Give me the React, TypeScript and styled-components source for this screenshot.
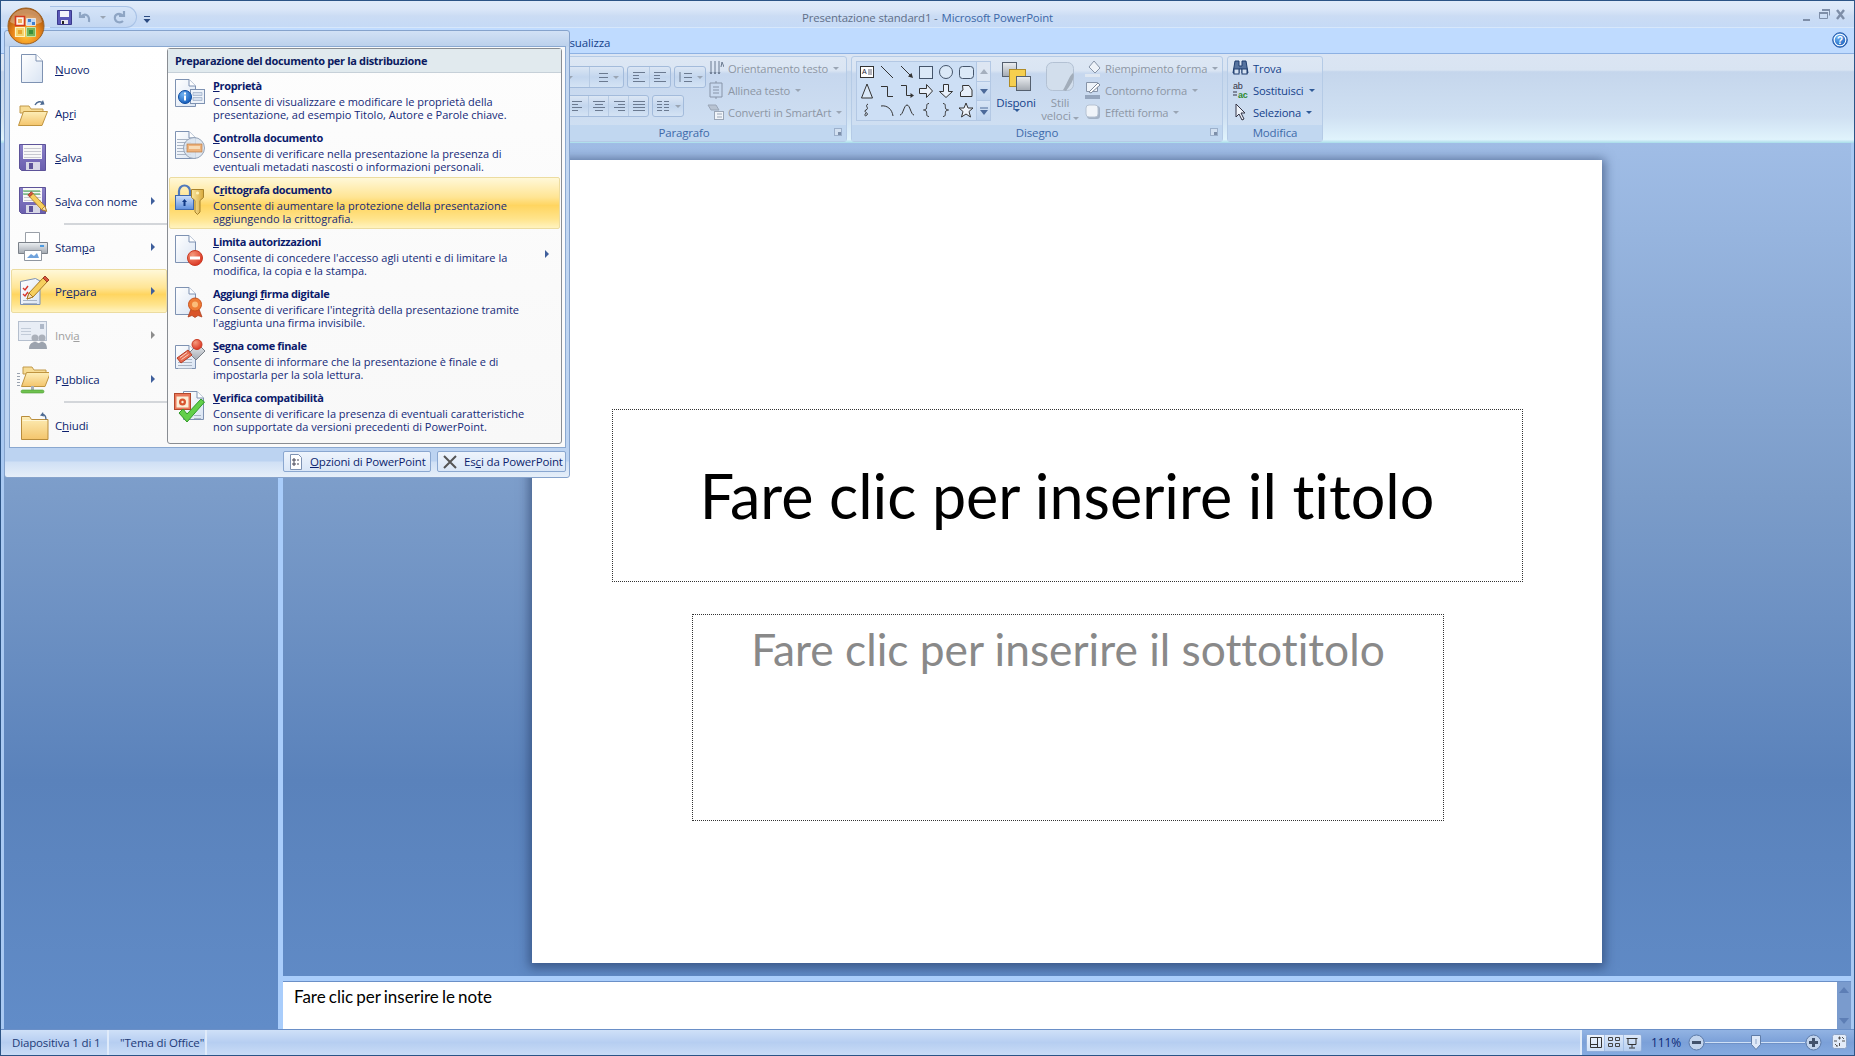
import React from "react";
import styled, { createGlobalStyle } from "styled-components";

const GlobalStyle = createGlobalStyle`
  html, body { margin: 0; padding: 0; height: 100%; overflow: hidden; }
  #root { height: 100%; }
  body { font-family: "Open Sans", "Liberation Sans", sans-serif; font-size: 11px; }
  u { text-underline-offset: 1px; }
`;

const Window = styled.div`
  position: relative;
  width: 1855px;
  height: 1056px;
  display: flex;
  flex-direction: column;
  overflow: hidden;
  background: #bfdbff;
  box-sizing: border-box;
  border: 1px solid #2c5486;
  letter-spacing: -0.15px;
`;

const DefsHolder = styled.svg`
  position: absolute;
  width: 0;
  height: 0;
`;

/* title bar */
const TitleBar = styled.div`
  height: 27px;
  flex: none;
  box-sizing: border-box;
  display: flex;
  align-items: center;
  justify-content: center;
  background: linear-gradient(#e0ebfa 0, #dbe7f8 30%, #cbdcf4 55%, #c5daf6 96%, #e6f3ff 100%);
  padding-top: 6px;
  font-size: 11.4px;
`;
const TitleDoc = styled.span` color: #5f6f88; `;
const TitleApp = styled.span` color: #3c68a8; margin-left: 4px; `;

const Qat = styled.div`
  position: absolute;
  left: 49px;
  top: 5px;
  width: 87px;
  height: 22px;
  box-sizing: border-box;
  border: 1px solid #a8c2e6;
  border-left: 0;
  border-radius: 0 12px 12px 0;
  background: linear-gradient(#d5e4f8, #c3d7f2);
  display: flex;
  align-items: center;
  padding-left: 7px;
  gap: 6px;
`;
const QatMore = styled.div`
  position: absolute;
  left: 142px;
  top: 12px;
  width: 8px;
  height: 10px;
`;
const WinControls = styled.div`
  position: absolute;
  right: 3px;
  top: 4px;
  display: flex;
`;

/* tabs */
const TabRow = styled.div`
  height: 25px;
  flex: none;
  box-sizing: border-box;
  background: #bfdbff;
  display: flex;
  align-items: center;
  padding: 3px 0 0 101px;
  color: #15428b;
  font-size: 11.5px;
`;
const Tab = styled.span<{ $w: number }>`
  width: ${(p) => p.$w}px;
  flex: none;
`;
const HelpSlot = styled.div`
  margin-left: auto;
  margin-right: 6px;
  width: 16px;
  height: 16px;
  margin-top: -5px;
`;

/* ribbon */
const Ribbon = styled.div`
  height: 90px;
  flex: none;
  box-sizing: border-box;
  padding: 2px 5px 1px 4px;
  display: flex;
  gap: 4px;
  border-top: 1px solid #8db1e3;
  background: linear-gradient(#dbe5f3 0, #d9e4f2 18%, #c5d6ec 20%, #cfe0f2 70%, #e0f3fc 96%, #a7dde9 100%);
`;
const Group = styled.section<{ $w: number }>`
  flex: none;
  width: ${(p) => p.$w}px;
  height: 86px;
  box-sizing: border-box;
  border: 1px solid #b5cbe6;
  border-radius: 3px;
  display: flex;
  flex-direction: column;
  background: linear-gradient(#dde7f4 0, #dae5f3 16%, #c6d7ee 20%, #d1e1f3 100%);
`;
const GroupBody = styled.div`
  flex: 1;
  display: flex;
  min-height: 0;
`;
const Caption = styled.div`
  position: relative;
  height: 16px;
  flex: none;
  text-align: center;
  line-height: 15px;
  color: #3e6aaa;
  background: #c1d7f0;
  font-size: 11.5px;
`;
const Launcher = styled.div`
  position: absolute;
  right: 4px;
  top: 3px;
  width: 8px;
  height: 8px;
  border: 1px solid #9cb0cb;
  box-sizing: border-box;
  background: #d2e0f1;
  &::after {
    content: "";
    position: absolute;
    right: 0;
    bottom: 0;
    width: 3px;
    height: 3px;
    background: #7d8fa9;
  }
`;
const ParaTools = styled.div`
  flex: 1;
  display: flex;
  flex-direction: column;
  align-items: flex-end;
  padding-top: 9px;
  gap: 7px;
`;
const ToolRow = styled.div<{ $pad?: number }>`
  display: flex;
  gap: 3px;
  padding-right: ${(p) => p.$pad ?? 0}px;
`;
const ToolSet = styled.div`
  display: flex;
  height: 22px;
  box-sizing: border-box;
  border: 1px solid #a3bbdb;
  border-radius: 3px;
  background: linear-gradient(#dbe6f4, #c3d6ee 50%, #d4e3f4);
`;
const ToolCell = styled.div<{ $w: number }>`
  width: ${(p) => p.$w}px;
  display: flex;
  align-items: center;
  justify-content: center;
  gap: 2px;
  box-sizing: border-box;
  border-left: 1px solid #b7cbe4;
  &:first-child { border-left: 0; }
`;
const CommandList = styled.div<{ $w: number; $left?: number }>`
  width: ${(p) => p.$w}px;
  flex: none;
  margin-left: ${(p) => p.$left ?? 0}px;
`;
const Command = styled.div<{ $off?: boolean }>`
  height: 22px;
  display: flex;
  align-items: center;
  gap: 3px;
  white-space: nowrap;
  color: ${(p) => (p.$off ? "#8d97a5" : "#15428b")};
  font-size: 11.2px;
`;
const CommandIcon = styled.span`
  width: 18px;
  height: 18px;
  flex: none;
  display: flex;
  align-items: center;
  justify-content: center;
`;
const Caret = styled.i<{ $off?: boolean }>`
  display: inline-block;
  width: 0;
  height: 0;
  margin-left: 2px;
  border: 3px solid transparent;
  border-bottom: 0;
  border-top-color: ${(p) => (p.$off ? "#9aa5b4" : "#2f5a97")};
`;
const Gallery = styled.div`
  margin: 4px 3px 0 4px;
  width: 135px;
  height: 60px;
  flex: none;
  box-sizing: border-box;
  border: 1px solid #b3c8e4;
  background: #cddff5;
  display: flex;
`;
const GalleryGrid = styled.div`
  width: 119px;
  display: grid;
  grid-template-columns: repeat(6, 1fr);
  grid-auto-rows: 1fr;
`;
const GalleryCell = styled.div`
  display: flex;
  align-items: center;
  justify-content: center;
`;
const GalleryScroll = styled.div`
  flex: 1;
  display: flex;
  flex-direction: column;
  border-left: 1px solid #b3c8e4;
`;
const ScrollBtn = styled.div<{ $active?: boolean }>`
  flex: 1;
  display: flex;
  align-items: center;
  justify-content: center;
  border-bottom: 1px solid #b3c8e4;
  background: ${(p) => (p.$active ? "linear-gradient(#d8e5f6,#bdd3ee)" : "#dde6f2")};
  &:last-child { border-bottom: 0; }
`;
const BigButton = styled.div<{ $w: number; $off?: boolean; $left?: number }>`
  width: ${(p) => p.$w}px;
  flex: none;
  margin-left: ${(p) => p.$left ?? 0}px;
  display: flex;
  flex-direction: column;
  align-items: center;
  text-align: center;
  color: ${(p) => (p.$off ? "#8d97a5" : "#15428b")};
  font-size: 11.5px;
  line-height: 13px;
`;
const BigIcon = styled.div`
  height: 39px;
  padding-top: 5px;
  box-sizing: border-box;
`;

/* workspace */
const Workspace = styled.div`
  flex: 1;
  min-height: 0;
  display: flex;
  border-left: 3px solid #a9c9f2;
  border-right: 3px solid #a9c9f2;
  background: linear-gradient(#a0bde6 0, #7b9cc9 40%, #5a82bb 72%, #618cc8 100%);
`;
const ThumbPane = styled.div`
  width: 274px;
  flex: none;
`;
const Splitter = styled.div`
  width: 5px;
  flex: none;
  background: #a9cdfb;
`;
const Main = styled.div`
  flex: 1;
  min-width: 0;
  display: flex;
  flex-direction: column;
`;
const Canvas = styled.div`
  flex: 1;
  min-height: 0;
  display: flex;
  align-items: center;
  justify-content: center;
  padding-top: 4px;
`;
const Slide = styled.div`
  width: 1070px;
  height: 803px;
  background: #fff;
  box-shadow: 0 2px 10px 3px rgba(30, 50, 90, 0.55);
  display: flex;
  flex-direction: column;
  align-items: center;
  padding-top: 249px;
  box-sizing: border-box;
  font-family: Lato, "Open Sans", sans-serif;
  font-variant-ligatures: none;
  letter-spacing: 0;
`;
const Placeholder = styled.div<{ $w: number; $h: number; $top?: number; $left?: number }>`
  width: ${(p) => p.$w}px;
  height: ${(p) => p.$h}px;
  margin-top: ${(p) => p.$top ?? 0}px;
  margin-left: ${(p) => p.$left ?? 0}px;
  box-sizing: border-box;
  border: 1px dotted #333;
  text-align: center;
`;
const TitleText = styled.div`
  font-size: 61px;
  line-height: 172px;
  color: #000;
`;
const SubtitleText = styled.div`
  font-size: 44.3px;
  line-height: 68px;
  color: #898989;
`;
const NotesStrip = styled.div`
  height: 5px;
  flex: none;
  background: #a9cdfb;
`;
const Notes = styled.div`
  height: 48px;
  flex: none;
  display: flex;
  box-sizing: border-box;
  border-top: 1px solid #6a8fc7;
  background: #fff;
`;
const NotesText = styled.div`
  flex: 1;
  padding: 4px 11px;
  font-family: Lato, "Open Sans", sans-serif;
  font-size: 17px;
  letter-spacing: 0;
  word-spacing: -1.2px;
  color: #000;
`;
const NotesScroll = styled.div`
  width: 14px;
  flex: none;
  background: #7a9bcd;
  display: flex;
  flex-direction: column;
  align-items: center;
  justify-content: space-between;
  padding: 5px 0;
`;

/* status bar */
const StatusBar = styled.div`
  height: 25px;
  flex: none;
  display: flex;
  align-items: stretch;
  border-top: 1px solid #6a8fc7;
  background: linear-gradient(#cfe0f8, #b6cef1 50%, #c9dcf6);
  color: #1d3b78;
  font-size: 11.5px;
`;
const StatusCell = styled.div<{ $w: number }>`
  width: ${(p) => p.$w}px;
  box-sizing: border-box;
  padding-left: 11px;
  display: flex;
  align-items: center;
  white-space: nowrap;
  border-right: 2px solid #e0ebfa;
`;
const StatusRight = styled.div`
  margin-left: auto;
  width: 274px;
  border-left: 2px solid #e0ebfa;
  box-sizing: border-box;
  display: flex;
  align-items: center;
  padding-left: 4px;
  background: linear-gradient(#92b3e3, #7ba0d8 50%, #86abe0);
  color: #0d2a78;
`;
const ViewButtons = styled.div`
  width: 56px;
  height: 18px;
  display: flex;
  box-sizing: border-box;
  border: 1px solid #8fadda;
  border-radius: 2px;
  background: linear-gradient(#dce8f9, #b7cff0);
`;
const ViewBtn = styled.div`
  flex: 1;
  display: flex;
  align-items: center;
  justify-content: center;
  border-left: 1px solid #a4bfe6;
  &:first-child { border-left: 0; background: linear-gradient(#eff5fd, #cfe0f7); }
`;
const ZoomPct = styled.span`
  margin-left: 9px;
  width: 37px;
  font-size: 12px;
`;
const SliderTrack = styled.div`
  position: relative;
  width: 100px;
  height: 1px;
  background: #cfe0f6;
  box-shadow: 0 1px 0 #6f92c8;
`;
const SliderThumb = styled.div`
  position: absolute;
  left: 46px;
  top: -7px;
`;
const FitBtn = styled.div`
  margin-left: 10px;
`;

/* office menu */
const Orb = styled.div`
  position: absolute;
  left: 6px;
  top: 6px;
  width: 38px;
  height: 38px;
  z-index: 3;
`;
const Menu = styled.div`
  position: absolute;
  left: 3px;
  top: 29px;
  width: 566px;
  height: 448px;
  z-index: 2;
  box-sizing: border-box;
  border: 1px solid #86a3cc;
  border-radius: 3px;
  padding: 15px 3px 0 4px;
  background: linear-gradient(#d2e1f5 0, #bcd1ec 15px, #c5d8f0 16px, #bcd3f1 417px, #bcd3f1 430px, #d0e0f5 431px, #e6eff9 100%);
  display: flex;
  flex-direction: column;
`;
const MenuBody = styled.div`
  height: 402px;
  flex: none;
  box-sizing: border-box;
  border: 1px solid #8aa8d0;
  background: #fafafa;
  display: flex;
`;
const LeftMenu = styled.div`
  width: 157px;
  flex: none;
  background: linear-gradient(#fff, #f9f9f9);
`;
const LeftItem = styled.div<{ $on?: boolean; $off?: boolean }>`
  height: 44px;
  display: flex;
  align-items: center;
  box-sizing: border-box;
  padding-left: 5px;
  margin-left: 1px;
  gap: 6px;
  color: ${(p) => (p.$off ? "#a0a0a0" : "#0c1f6e")};
  font-size: 11.5px;
  border: 1px solid ${(p) => (p.$on ? "#ecdca0" : "transparent")};
  border-radius: 2px;
  background: ${(p) =>
    p.$on ? "linear-gradient(#fff8d8 0, #ffe595 42%, #ffd560 58%, #ffe48c 82%, #fff3bf 100%)" : "none"};
`;
const LeftLabel = styled.span`
  flex: 1;
`;
const SubArrow = styled.i<{ $off?: boolean }>`
  width: 0;
  height: 0;
  margin-right: 11px;
  border: 4px solid transparent;
  border-right: 0;
  border-left: 4px solid ${(p) => (p.$off ? "#8d8d8d" : "#3f5f9c")};
`;
const MenuRule = styled.div`
  height: 2px;
  margin-left: 54px;
  background: #d3d6da;
`;
const RightPanel = styled.div`
  width: 395px;
  height: 396px;
  flex: none;
  margin: 1px 0 0 0;
  box-sizing: border-box;
  border: 1px solid #898d93;
  border-radius: 3px;
  background: linear-gradient(#fdfdfd, #f8f8f8);
`;
const PanelHead = styled.div`
  height: 24px;
  box-sizing: border-box;
  padding-left: 7px;
  display: flex;
  align-items: center;
  background: #e1eaee;
  border-bottom: 1px solid #c6d0d8;
  color: #0b1a5f;
  font-weight: 700;
  font-size: 11px;
  letter-spacing: -0.33px;
`;
const PanelItem = styled.div<{ $on?: boolean }>`
  position: relative;
  height: 52px;
  display: flex;
  box-sizing: border-box;
  margin: 0 1px;
  padding: 5px 0 0 4px;
  gap: 7px;
  border: 1px solid ${(p) => (p.$on ? "#ecdca0" : "transparent")};
  border-radius: 2px;
  background: ${(p) =>
    p.$on ? "linear-gradient(#fff8d8 0, #ffe595 38%, #ffd560 55%, #ffe48c 82%, #fff3bf 100%)" : "none"};
`;
const PanelIcon = styled.div`
  width: 32px;
  flex: none;
`;
const PanelTitle = styled.div`
  font-weight: 700;
  color: #0b1a6b;
  font-size: 11px;
  line-height: 13px;
  height: 16px;
  letter-spacing: -0.35px;
`;
const PanelDesc = styled.div`
  color: #142a78;
  font-size: 11px;
  line-height: 13px;
  white-space: pre-line;
  letter-spacing: 0;
`;
const PanelArrow = styled(SubArrow)`
  position: absolute;
  right: 10px;
  top: 20px;
  margin: 0;
`;
const MenuFoot = styled.div`
  flex: 1;
  display: flex;
  justify-content: flex-end;
  gap: 6px;
  padding: 3px 0 0;
`;
const FootButton = styled.div<{ $w: number }>`
  width: ${(p) => p.$w}px;
  height: 21px;
  box-sizing: border-box;
  border: 1px solid #8aa7d0;
  border-radius: 2px;
  background: linear-gradient(#eef4fc, #d9e6f7);
  display: flex;
  align-items: center;
  gap: 6px;
  padding-left: 4px;
  color: #0c1f6e;
  font-size: 11.5px;
`;

/* drawings */
const Defs = () => (
  <DefsHolder aria-hidden="true">
    <defs>
      <linearGradient id="pg" x1="0" y1="0" x2="1" y2="1"><stop offset="0" stopColor="#ffffff" /><stop offset="1" stopColor="#d9e4f3" /></linearGradient>
      <linearGradient id="fo" x1="0" y1="0" x2="0" y2="1"><stop offset="0" stopColor="#fdeeb8" /><stop offset="1" stopColor="#f4c56c" /></linearGradient>
      <linearGradient id="fl" x1="0" y1="0" x2="0" y2="1"><stop offset="0" stopColor="#8a80c8" /><stop offset="1" stopColor="#6a5fae" /></linearGradient>
      <radialGradient id="orb" cx="50%" cy="75%" r="62%"><stop offset="0" stopColor="#ffc53a" /><stop offset=".55" stopColor="#ee8a1c" /><stop offset="1" stopColor="#b05a0e" /></radialGradient>
      <radialGradient id="blueb" cx="35%" cy="30%" r="80%"><stop offset="0" stopColor="#6fb2f2" /><stop offset="1" stopColor="#0d55b5" /></radialGradient>
      <radialGradient id="redb" cx="35%" cy="30%" r="80%"><stop offset="0" stopColor="#f49a7c" /><stop offset="1" stopColor="#d92b1a" /></radialGradient>
      <linearGradient id="lk" x1="0" y1="0" x2="0" y2="1"><stop offset="0" stopColor="#cfe1fb" /><stop offset="1" stopColor="#5f8fdc" /></linearGradient>
      <linearGradient id="kk" x1="0" y1="0" x2="1" y2="0"><stop offset="0" stopColor="#fbe8a0" /><stop offset="1" stopColor="#d8a93c" /></linearGradient>
      <linearGradient id="gr" x1="0" y1="0" x2="0" y2="1"><stop offset="0" stopColor="#eceff2" /><stop offset="1" stopColor="#a3a9b1" /></linearGradient>
    </defs>
  </DefsHolder>
);

const Sheet = ({ x = 0, y = 0, w = 22, h = 29 }: { x?: number; y?: number; w?: number; h?: number }) => (
  <g>
    <path d={`M${x + 0.5} ${y + 0.5}H${x + w - 7}L${x + w - 0.5} ${y + 7}V${y + h - 0.5}H${x + 0.5}Z`} fill="url(#pg)" stroke="#7e92b2" />
    <path d={`M${x + w - 7} ${y + 0.5}V${y + 7}H${x + w - 0.5}`} fill="#fff" stroke="#7e92b2" />
  </g>
);
const TextLines = ({ x, y, w, n, c = "#a9b4c4", step = 3 }: { x: number; y: number; w: number; n: number; c?: string; step?: number }) => (
  <path d={Array.from({ length: n }, (_, i) => `M${x} ${y + i * step + 0.5}h${w}`).join("")} stroke={c} />
);
const Pencil = ({ t = "" }: { t?: string }) => (
  <g transform={t}>
    <path d="M20 4l4 4L10 23l-6 2 2-6z" fill="#f6cf5e" stroke="#a97a24" />
    <path d="M6 19l4 4-6 2z" fill="#f5dfb8" stroke="#a97a24" />
    <path d="M20 4l2-2 4 4-2 2z" fill="#d8563b" stroke="#9c3c2a" />
  </g>
);
const Folder = ({ open }: { open?: boolean }) =>
  open ? (
    <g>
      <path d="M3 9h9l2 3h12v4H3z" fill="#f7dc95" stroke="#c29a4c" />
      <path d="M6.500 14.500H30.500L25 28.500H1.500z" fill="url(#fo)" stroke="#bf9440" />
    </g>
  ) : (
    <g>
      <path d="M2.500 7.500h8l2 3h16.500v20H2.500z" fill="url(#fo)" stroke="#b98d3c" />
      <path d="M3.500 11.500H28" stroke="#fff6d4" />
    </g>
  );
const Floppy = () => (
  <g>
    <path d="M1.500 1.500H27.500V27.500H3.500L1.500 25.500Z" fill="url(#fl)" stroke="#5d5399" />
    <rect x="5" y="2" width="19" height="14" fill="#f8f8f8" />
    <TextLines x={6} y={5} w={17} n={4} c="#c8c8d0" />
    <rect x="8" y="19" width="14" height="8" fill="#d7d7e6" />
    <rect x="11" y="20" width="4" height="6" fill="#5d5399" />
  </g>
);

const Ic = ({ s = 32, children }: { s?: number; children: React.ReactNode }) => (
  <svg width={s} height={s} viewBox={`0 0 ${s} ${s}`}>{children}</svg>
);

const icons = {
  nuovo: <Ic><Sheet x={4} y={1} /></Ic>,
  apri: (
    <Ic>
      <Folder open />
      <path d="M18 8c2-4 6-4 8-2" fill="none" stroke="#4d6a92" strokeWidth="1.400" />
      <path d="M26 3l1.500 4.500L23 8z" fill="#4d6a92" />
    </Ic>
  ),
  salva: <Ic><g transform="translate(1,2)"><Floppy /></g></Ic>,
  salvaNome: (
    <Ic>
      <g transform="translate(1,1)"><Floppy /></g>
      <path d="M6 6h17M6 9h17" stroke="#3aa24a" />
      <Pencil t="translate(33,5) scale(-.85,.85)" />
    </Ic>
  ),
  stampa: (
    <Ic>
      <path d="M8.500 1.500h14v10h-14z" fill="#fff" stroke="#9aa0a8" />
      <path d="M1.500 11.500h29v11h-29z" fill="url(#gr)" stroke="#7b8189" />
      <rect x="23" y="14" width="4" height="2" fill="#4d9ae0" />
      <path d="M7.500 19.500h17v10h-17z" fill="#fff" stroke="#8f96a0" />
      <path d="M10 27l4-4 3 2 3-3 2 5z" fill="#6fa2dc" />
    </Ic>
  ),
  prepara: (
    <Ic>
      <path d="M3.500 6.500l15-3L23 6v23.500H3.500z" fill="url(#pg)" stroke="#7e92b2" />
      <path d="M6 13l2 2 3-4M6 19l2 2 3-4" fill="none" stroke="#d8352a" strokeWidth="1.400" />
      <TextLines x={6} y={25} w={14} n={2} />
      <Pencil t="translate(6,-1)" />
    </Ic>
  ),
  invia: (
    <Ic>
      <rect x="1.500" y="2.500" width="28" height="19" fill="#e8edf5" stroke="#b5bfce" />
      <rect x="23" y="5" width="4" height="5" fill="#aeb8c8" />
      <TextLines x={4} y={9} w={10} n={3} c="#c2cbd8" />
      <circle cx="18" cy="19" r="3.500" fill="#aab0ba" /><circle cx="25" cy="19" r="3.500" fill="#aab0ba" />
      <path d="M12 30c0-6 4-7 6-7s6 1 6 7zM20 30c0-6 3-7 5-7s5 1 5 7z" fill="#9ca3ae" />
    </Ic>
  ),
  pubblica: (
    <Ic>
      <TextLines x={0} y={10} w={3} n={5} c="#9aa3b0" />
      <g transform="translate(3,-5)"><Folder open /></g>
      <rect x="14" y="23" width="3" height="5" fill="#a8adb5" />
      <rect x="4" y="27" width="23" height="3" rx="1.500" fill="#6fc24f" stroke="#4b9a33" strokeWidth=".6" />
    </Ic>
  ),
  chiudi: (
    <Ic>
      <g transform="translate(2,0)"><Folder /></g>
      <path d="M26 3l-3 3.500 4 1z" fill="#4d6a92" />
      <path d="M25 5.500c3 0 4 2 4 5" fill="none" stroke="#4d6a92" strokeWidth="1.300" />
    </Ic>
  ),
  proprieta: (
    <Ic>
      <Sheet x={1} y={0} w={21} h={28} />
      <rect x="16.500" y="10.500" width="14" height="14" fill="#eef3fa" stroke="#7e92b2" />
      <path d="M19 13.500h9v3h-9zM19 18.500h9v3h-9z" fill="#d5dfee" stroke="#9cadc6" strokeWidth=".7" />
      <circle cx="11" cy="18" r="6.500" fill="url(#blueb)" stroke="#0c4aa0" />
      <path d="M10 13.500h2v2h-2zM10 16.500h2v5h-2z" fill="#fff" />
    </Ic>
  ),
  controlla: (
    <Ic>
      <Sheet x={1} y={0} w={21} h={28} />
      <TextLines x={3} y={8} w={14} n={6} />
      <circle cx="20" cy="17" r="10.500" fill="#dbe4ef" fillOpacity=".85" stroke="#96a4b8" />
      <rect x="13" y="13" width="15" height="8" fill="#eeb37c" stroke="#b87a44" strokeWidth=".7" />
      <rect x="15" y="15" width="11" height="3" fill="#f7dcb8" />
    </Ic>
  ),
  critto: (
    <Ic>
      <path d="M5 13V8a5.500 5.500 0 0 1 11 0v5" fill="none" stroke="#5079bb" strokeWidth="2.200" />
      <rect x="1.500" y="12.500" width="18" height="14" fill="url(#lk)" stroke="#3f68ad" />
      <path d="M10.500 16l2.500 3h-1.500v4h-2v-4H8z" fill="#123a86" />
      <path d="M17.500 6.500H29.500V14.500L26 17.500V29L23.500 31.500 21 29V17.500L17.500 14.500Z" fill="url(#kk)" stroke="#a8832c" />
      <circle cx="23.500" cy="10" r="1.600" fill="#fff2b8" />
    </Ic>
  ),
  limita: (
    <Ic>
      <Sheet x={1} y={0} w={21} h={28} />
      <circle cx="21" cy="23" r="7.500" fill="url(#redb)" stroke="#c93b24" />
      <rect x="16" y="21.500" width="10" height="3" fill="#fff" />
    </Ic>
  ),
  firma: (
    <Ic>
      <Sheet x={1} y={0} w={21} h={28} />
      <path d="M17 22l-3 8 4-1.500 3 2 3-2 4 1.500-3-8z" fill="#d9552a" stroke="#a83a18" strokeWidth=".7" />
      <circle cx="21" cy="17.500" r="6.500" fill="#ef7c35" stroke="#c9521e" />
      <circle cx="21" cy="17.500" r="3" fill="#fbbd7a" />
    </Ic>
  ),
  segna: (
    <Ic>
      <Sheet x={1} y={6} w={21} h={24} />
      <TextLines x={4} y={20} w={14} n={4} />
      <path d="M15 14l9-9 7 7-9 9z" fill="url(#gr)" stroke="#7a8088" />
      <circle cx="23" cy="5.500" r="5" fill="url(#redb)" stroke="#c93b24" />
      <path d="M3 19l11-8 4 5-11 8z" fill="#e66d52" stroke="#b53c25" />
      <path d="M6 18.500l7-5M7.500 20.500l7-5" stroke="#fbd4c4" />
    </Ic>
  ),
  verifica: (
    <Ic>
      <Sheet x={9} y={0} w={21} h={29} />
      <TextLines x={20} y={24} w={7} n={2} />
      <rect x="0.500" y="2.500" width="16" height="16" fill="#e9785a" stroke="#b3482c" />
      <rect x="2.500" y="5.500" width="12" height="11" fill="#fbeed8" />
      <circle cx="8.500" cy="11" r="3.500" fill="#d8552f" /><circle cx="8.500" cy="11" r="1.200" fill="#fbeed8" />
      <path d="M5 22l4-4 4 5L27 8l3.500 3L13 31z" fill="#62cf4a" stroke="#2f9a28" />
    </Ic>
  ),
};

const OrbIcon = () => (
  <svg width="38" height="38" viewBox="0 0 38 38">
    <circle cx="19" cy="19" r="18" fill="url(#orb)" stroke="#9c6224" />
    <path d="M3 15C4 7 11 2 19 2s15 5 16 13c-5 3-11 3-16 3s-11 0-16-3z" fill="#ffffff" fillOpacity=".32" />
    <path d="M8.500 9.500h9v9h-9z" fill="#fff3e4" stroke="#d33a20" strokeWidth="1.600" />
    <rect x="11" y="12" width="4" height="4" fill="#f0b060" />
    <path d="M19.500 11.500h9v7h-9z" fill="#bcd6f3" stroke="#fff" strokeWidth=".6" />
    <rect x="21" y="12" width="3" height="3" fill="#3d7fd0" /><rect x="25" y="15" width="3" height="3" fill="#3d7fd0" />
    <path d="M8.500 20.500h9v9h-9z" fill="#f3d36c" stroke="#fff3c4" strokeWidth="1.200" />
    <rect x="11" y="23" width="4" height="4" fill="#e8a52e" />
    <path d="M19.500 20.500h9v9h-9z" fill="#77b356" stroke="#c6e4a8" strokeWidth="1" />
    <rect x="22" y="23" width="4" height="4" fill="#3a8f3c" />
  </svg>
);

const lines = (x: number, widths: number[], start: number, step: number) =>
  widths.map((w, i) => `M${x} ${start + i * step + 0.5}h${w}`).join("");

const Small = ({ d, c = "#6b7a90", w = 14, h = 14 }: { d: string; c?: string; w?: number; h?: number }) => (
  <svg width={w} height={h} viewBox={`0 0 ${w} ${h}`}><path d={d} fill="none" stroke={c} /></svg>
);

const shapeCells: React.ReactNode[] = [
  <svg width="14" height="14" key="tb"><rect x=".5" y="1.500" width="13" height="11" fill="#fff" stroke="#333" /><text x="2" y="9" fontSize="7" fontFamily="Liberation Sans" fill="#223">A</text><path d="M8 5h4M8 7h4M8 9h4" stroke="#667" /></svg>,
  <Small key="l" c="#333" d="M1 1L13 13" />,
  <svg width="14" height="14" key="a"><path d="M1 1L11 11" stroke="#333" /><path d="M13 13l-5-1.500 3.500-3.500z" fill="#333" /></svg>,
  <svg width="14" height="14" key="r"><rect x=".5" y="1.500" width="13" height="12" fill="#dbe9f8" stroke="#44546a" /></svg>,
  <svg width="16" height="16" key="e"><circle cx="8" cy="8" r="6.500" fill="#dbe9f8" stroke="#44546a" /></svg>,
  <svg width="15" height="14" key="rr"><rect x=".5" y="1.500" width="14" height="12" rx="3" fill="#dbe9f8" stroke="#44546a" /></svg>,
  <svg width="14" height="16" key="t"><path d="M7 1L12.500 15H1.500Z" fill="#dbe9f8" stroke="#333" /></svg>,
  <Small key="e1" c="#333" d="M1 2.500H7.500V12.500H13" />,
  <svg width="14" height="16" key="e2"><path d="M1 2.500H6.500V12.500H11" fill="none" stroke="#333" /><path d="M14 12.500l-3.500-2.500v5z" fill="#333" /></svg>,
  <svg width="16" height="16" key="ra"><path d="M1.500 5.500H8.500V1.500L14.500 8 8.500 14.500V10.500H1.500Z" fill="#e8f0fa" stroke="#333" /></svg>,
  <svg width="16" height="16" key="da"><path d="M5.500 1.500H10.500V8.500H14.500L8 14.500 1.500 8.500H5.500Z" fill="#e8f0fa" stroke="#333" /></svg>,
  <svg width="14" height="14" key="p"><path d="M3.500 1.500H10L13 6V12.500H1.500V8L4 6Z" fill="#e8f0fa" stroke="#333" /></svg>,
  <Small key="sq" c="#333" d="M8 1C4 3 10 5 6 7 2 9 9 9 7 12 5 14 4 12 6 10" />,
  <Small key="arc" c="#333" d="M1 3C7 2 12 6 13 13" />,
  <Small key="wave" c="#333" d="M0 12C3 12 4 2 7 2S11 12 14 12" />,
  <Small key="lb" c="#333" d="M10 .5C7 .5 8 3 7.500 5S6 7 4.500 7C6 7 7 7 7.500 9S7 13.500 10 13.500" />,
  <Small key="rb" c="#333" d="M4 .5C7 .5 6 3 6.500 5S8 7 9.500 7C8 7 7 7 6.500 9S7 13.500 4 13.500" />,
  <svg width="16" height="16" key="st"><path d="M8 1l2 5h5l-4 3.500 1.500 5.500L8 12l-4.500 3L5 9.500 1 6h5z" fill="#eef3fa" stroke="#333" /></svg>,
];

const leftItems: { label: React.ReactNode; icon: React.ReactNode; sub?: boolean; on?: boolean; off?: boolean; rule?: boolean }[] = [
  { label: <><u>N</u>uovo</>, icon: icons.nuovo },
  { label: <>Ap<u>r</u>i</>, icon: icons.apri },
  { label: <><u>S</u>alva</>, icon: icons.salva },
  { label: <>Sa<u>l</u>va con nome</>, icon: icons.salvaNome, sub: true, rule: true },
  { label: <>Stam<u>p</u>a</>, icon: icons.stampa, sub: true },
  { label: <>Pr<u>e</u>para</>, icon: icons.prepara, sub: true, on: true },
  { label: <>Invi<u>a</u></>, icon: icons.invia, sub: true, off: true },
  { label: <>P<u>u</u>bblica</>, icon: icons.pubblica, sub: true, rule: true },
  { label: <>C<u>h</u>iudi</>, icon: icons.chiudi },
];

const panelItems: { title: React.ReactNode; desc: string; icon: React.ReactNode; on?: boolean; sub?: boolean }[] = [
  { title: <><u>P</u>roprietà</>, desc: "Consente di visualizzare e modificare le proprietà della\npresentazione, ad esempio Titolo, Autore e Parole chiave.", icon: icons.proprieta },
  { title: <><u>C</u>ontrolla documento</>, desc: "Consente di verificare nella presentazione la presenza di\neventuali metadati nascosti o informazioni personali.", icon: icons.controlla },
  { title: <>C<u>r</u>ittografa documento</>, desc: "Consente di aumentare la protezione della presentazione\naggiungendo la crittografia.", icon: icons.critto, on: true },
  { title: <><u>L</u>imita autorizzazioni</>, desc: "Consente di concedere l'accesso agli utenti e di limitare la\nmodifica, la copia e la stampa.", icon: icons.limita, sub: true },
  { title: <>Aggiungi <u>f</u>irma digitale</>, desc: "Consente di verificare l'integrità della presentazione tramite\nl'aggiunta una firma invisibile.", icon: icons.firma },
  { title: <><u>S</u>egna come finale</>, desc: "Consente di informare che la presentazione è finale e di\nimpostarla per la sola lettura.", icon: icons.segna },
  { title: <><u>V</u>erifica compatibilità</>, desc: "Consente di verificare la presenza di eventuali caratteristiche\nnon supportate da versioni precedenti di PowerPoint.", icon: icons.verifica },
];

export default function App() {
  return (
    <>
      <GlobalStyle />
      <Window>
        <Defs />
        <TitleBar>
          <TitleDoc>Presentazione standard1 -</TitleDoc>
          <TitleApp>Microsoft PowerPoint</TitleApp>
        </TitleBar>
        <Qat>
          <svg width="15" height="15" viewBox="0 0 15 15">
            <path d="M.5.500H14.500V14.500H.5Z" fill="#5a58b8" stroke="#3b3a8c" />
            <rect x="3" y="1" width="9" height="6" fill="#f2f3fa" />
            <rect x="4" y="10" width="7" height="4" fill="#e6e6ee" /><rect x="5" y="11" width="2" height="3" fill="#222" />
          </svg>
          <svg width="14" height="14" viewBox="0 0 14 14"><path d="M2 2v5h5M3 7C6 3 12 4 11 12" fill="none" stroke="#8ea5c4" strokeWidth="2.200" /></svg>
          <Caret $off />
          <svg width="14" height="14" viewBox="0 0 14 14"><path d="M12 1v5H7M11 6C8 2 2 4 3 9c1 4 6 4 8 2" fill="none" stroke="#8ea5c4" strokeWidth="2.200" /></svg>
        </Qat>
        <QatMore>
          <svg width="8" height="10" viewBox="0 0 8 10"><path d="M1 1.500h6" stroke="#2b4a80" /><path d="M.5 4h7L4 8z" fill="#2b4a80" /></svg>
        </QatMore>
        <WinControls>
          <svg width="52" height="20" viewBox="0 0 52 20">
            <rect x="4" y="14" width="7" height="2" fill="#7e8ea8" />
            <path d="M20.500 7.500h8v6h-8z" fill="none" stroke="#7e8ea8" /><rect x="20" y="7" width="9" height="2" fill="#7e8ea8" />
            <path d="M23.500 4.500h7v6" fill="none" stroke="#7e8ea8" /><rect x="23" y="4" width="8" height="2" fill="#7e8ea8" />
            <path d="M38 5l7 9M45 5l-7 9" stroke="#7e8ea8" strokeWidth="2.400" />
          </svg>
        </WinControls>
        <TabRow>
          <Tab $w={56}>Home</Tab>
          <Tab $w={76}>Inserimento</Tab>
          <Tab $w={86}>Progettazione</Tab>
          <Tab $w={72}>Animazioni</Tab>
          <Tab $w={92}>Presentazione</Tab>
          <Tab $w={76}>Revisione</Tab>
          <Tab $w={72}>Visualizza</Tab>
          <HelpSlot>
            <svg width="16" height="16" viewBox="0 0 16 16">
              <circle cx="8" cy="8" r="7.300" fill="url(#blueb)" stroke="#2a5ca8" />
              <circle cx="8" cy="8" r="5.800" fill="none" stroke="#fff" strokeWidth="1.100" />
              <text x="8" y="11.500" textAnchor="middle" fontSize="10" fontWeight="700" fontFamily="Liberation Sans" fill="#fff">?</text>
            </svg>
          </HelpSlot>
        </TabRow>
        <Ribbon>
          <Group $w={64} />
          <Group $w={170} />
          <Group $w={270} />
          <Group $w={326}>
            <GroupBody>
              <ParaTools>
                <ToolRow>
                  <ToolSet>
                    <ToolCell $w={40}><Caret $off /></ToolCell>
                    <ToolCell $w={34}>
                      <Small w={15} d={lines(5, [9, 9, 9], 3, 4)} /><Caret $off />
                    </ToolCell>
                  </ToolSet>
                  <ToolSet>
                    <ToolCell $w={21}><Small d={lines(1, [12, 6, 6, 12], 2, 3)} /></ToolCell>
                    <ToolCell $w={21}><Small d={lines(1, [12, 6, 6, 12], 2, 3)} /></ToolCell>
                  </ToolSet>
                  <ToolSet>
                    <ToolCell $w={30}><Small w={16} d={`M3 2v10${lines(7, [8, 8, 8], 3, 4)}`} /><Caret $off /></ToolCell>
                  </ToolSet>
                </ToolRow>
                <ToolRow $pad={22}>
                  <ToolSet>
                    <ToolCell $w={20}><Small d={lines(1, [10, 6, 10, 6], 2, 3)} /></ToolCell>
                    <ToolCell $w={20}><Small d="M1 2.500h12M3 5.500h8M1 8.500h12M3 11.500h8" /></ToolCell>
                    <ToolCell $w={20}><Small d="M2 2.500h11M6 5.500h7M2 8.500h11M6 11.500h7" /></ToolCell>
                    <ToolCell $w={20}><Small d={lines(1, [12, 12, 12, 12], 2, 3)} /></ToolCell>
                  </ToolSet>
                  <ToolSet>
                    <ToolCell $w={30}><Small w={15} d={lines(1, [5, 5, 5, 5], 2, 3) + lines(8, [5, 5, 5, 5], 2, 3)} /><Caret $off /></ToolCell>
                  </ToolSet>
                </ToolRow>
              </ParaTools>
              <CommandList $w={139} $left={1}>
                <Command $off><CommandIcon><Small w={16} h={18} d="M3 2v13M7 2v13M11 2v13M2 13l1 2 1-2M6 13l1 2 1-2M10 13l1 2 1-2M14 3l-1 5M14 3l2 5" /></CommandIcon>Orientamento testo<Caret $off /></Command>
                <Command $off><CommandIcon><Small w={16} h={18} d="M2 2h12v14H2zM5 6h6M5 9h6M5 12h6M8 0v2M8 16v2" c="#8794a8" /></CommandIcon>Allinea testo<Caret $off /></Command>
                <Command $off><CommandIcon><svg width="18" height="18" viewBox="0 0 18 18"><path d="M1 2h8l3 5H4z" fill="#b8c3d2" stroke="#9aa6b7" /><rect x="7.500" y="8.500" width="9" height="8" fill="#f0f4f9" stroke="#9aa6b7" /><path d="M10 11h5M10 14h5" stroke="#9aa6b7" /></svg></CommandIcon>Converti in SmartArt<Caret $off /></Command>
              </CommandList>
            </GroupBody>
            <Caption>Paragrafo<Launcher /></Caption>
          </Group>
          <Group $w={372}>
            <GroupBody>
              <Gallery>
                <GalleryGrid>
                  {shapeCells.map((c, i) => <GalleryCell key={i}>{c}</GalleryCell>)}
                </GalleryGrid>
                <GalleryScroll>
                  <ScrollBtn><svg width="8" height="5"><path d="M4 0l4 5H0z" fill="#a5afbd" /></svg></ScrollBtn>
                  <ScrollBtn $active><svg width="8" height="5"><path d="M4 5L8 0H0z" fill="#4c6a9a" /></svg></ScrollBtn>
                  <ScrollBtn $active><svg width="8" height="8"><path d="M0 1h8" stroke="#4c6a9a" /><path d="M4 8L8 3H0z" fill="#4c6a9a" /></svg></ScrollBtn>
                </GalleryScroll>
              </Gallery>
              <BigButton $w={44}>
                <BigIcon>
                  <svg width="32" height="30" viewBox="0 0 32 30">
                    <rect x="2.500" y=".5" width="14" height="14" fill="url(#gr)" stroke="#55606f" />
                    <rect x="9.500" y="7.500" width="16" height="17" fill="#f6cf4f" stroke="#b08c26" />
                    <rect x="16.500" y="14.500" width="14" height="14" fill="url(#gr)" stroke="#55606f" />
                  </svg>
                </BigIcon>
                Disponi
                <Caret />
              </BigButton>
              <BigButton $w={38} $off $left={3}>
                <BigIcon>
                  <svg width="32" height="32" viewBox="0 0 32 32">
                    <rect x="2.500" y=".5" width="27" height="28" rx="6" fill="#d2deec" stroke="#b3c1d3" />
                    <path d="M29 11c3 5-4 14-7 18l-3-1c3-4 6-14 10-17z" fill="#a2adba" />
                  </svg>
                </BigIcon>
                Stili
                <span>veloci<Caret $off /></span>
              </BigButton>
              <CommandList $w={135} $left={5}>
                <Command $off>
                  <CommandIcon><svg width="18" height="18" viewBox="0 0 18 18"><path d="M5 8l5-6 6 7-5 5z" fill="#eef3f9" stroke="#8794a8" /><rect x="1" y="15" width="15" height="3" fill="#dfe7f1" /></svg></CommandIcon>
                  Riempimento forma<Caret $off />
                </Command>
                <Command $off>
                  <CommandIcon><svg width="18" height="18" viewBox="0 0 18 18"><path d="M2.500 1.500h11v9h-11z" fill="#eef3f9" stroke="#8794a8" /><path d="M5 11l9-9 2 2-9 8z" fill="#fff" stroke="#7c889a" /><rect x="1" y="14" width="15" height="4" fill="#94a5bd" /></svg></CommandIcon>
                  Contorno forma<Caret $off />
                </Command>
                <Command $off>
                  <CommandIcon><svg width="18" height="18" viewBox="0 0 18 18"><rect x="3" y="3" width="13" height="13" rx="3" fill="#a3b2c6" /><rect x="2" y="2" width="12" height="12" rx="3" fill="#f0f4f9" stroke="#b6c2d2" /></svg></CommandIcon>
                  Effetti forma<Caret $off />
                </Command>
              </CommandList>
            </GroupBody>
            <Caption>Disegno<Launcher /></Caption>
          </Group>
          <Group $w={96}>
            <GroupBody>
              <CommandList $w={90} $left={4}>
                <Command>
                  <CommandIcon><svg width="18" height="16" viewBox="0 0 18 16"><path d="M3 1h4v5h3V1h4l2 12h-6V9H7v4H1z" fill="#56739f" stroke="#1f3d6e" /><rect x="2" y="9" width="5" height="5" fill="#d5e2f2" stroke="#1f3d6e" /><rect x="10" y="9" width="5" height="5" fill="#d5e2f2" stroke="#1f3d6e" /></svg></CommandIcon>
                  Trova
                </Command>
                <Command>
                  <CommandIcon><svg width="18" height="18" viewBox="0 0 18 18"><text x="1" y="8" fontSize="9" fontFamily="Liberation Sans" fill="#334">ab</text><text x="6" y="17" fontSize="9" fontWeight="700" fontFamily="Liberation Sans" fill="#2f8a2f">ac</text><path d="M1 11h4M1 14h4" stroke="#334" /></svg></CommandIcon>
                  Sostituisci<Caret />
                </Command>
                <Command>
                  <CommandIcon><svg width="14" height="18" viewBox="0 0 14 18"><path d="M2 1v13l3-3 3 6 2-1-3-6h4z" fill="#eef3fa" stroke="#334" /></svg></CommandIcon>
                  Seleziona<Caret />
                </Command>
              </CommandList>
            </GroupBody>
            <Caption>Modifica</Caption>
          </Group>
        </Ribbon>
        <Workspace>
          <ThumbPane />
          <Splitter />
          <Main>
            <Canvas>
              <Slide>
                <Placeholder $w={911} $h={173}>
                  <TitleText>Fare clic per inserire il titolo</TitleText>
                </Placeholder>
                <Placeholder $w={752} $h={207} $top={32} $left={2}>
                  <SubtitleText>Fare clic per inserire il sottotitolo</SubtitleText>
                </Placeholder>
              </Slide>
            </Canvas>
            <NotesStrip />
            <Notes>
              <NotesText>Fare clic per inserire le note</NotesText>
              <NotesScroll>
                <svg width="10" height="6"><path d="M5 0l5 6H0z" fill="#5d7eb5" /></svg>
                <svg width="10" height="6"><path d="M5 6l5-6H0z" fill="#5d7eb5" /></svg>
              </NotesScroll>
            </Notes>
          </Main>
        </Workspace>
        <StatusBar>
          <StatusCell $w={108}>Diapositiva 1 di 1</StatusCell>
          <StatusCell $w={98}>"Tema di Office"</StatusCell>
          <StatusRight>
            <ViewButtons>
              <ViewBtn><svg width="12" height="11"><path d="M.5.500h11v10H.5zM7.500.500v10M.5 7.500h7" fill="none" stroke="#333" /></svg></ViewBtn>
              <ViewBtn><svg width="12" height="11"><path d="M.5.500h4v3h-4zM7.500.500h4v3h-4zM.5 6.500h4v3h-4zM7.500 6.500h4v3h-4z" fill="none" stroke="#444" /></svg></ViewBtn>
              <ViewBtn><svg width="12" height="12"><path d="M.5 1.500h11M2 1.500V7.500h8V1.500M6 7.500v3M3 11h6" fill="none" stroke="#333" /></svg></ViewBtn>
            </ViewButtons>
            <ZoomPct>111%</ZoomPct>
            <svg width="17" height="17" viewBox="0 0 17 17"><circle cx="8.500" cy="8.500" r="7.500" fill="#c2d4ed" stroke="#5c7aa8" /><rect x="4" y="7" width="9" height="3" fill="#42526c" /></svg>
            <SliderTrack>
              <SliderThumb>
                <svg width="10" height="15" viewBox="0 0 10 15"><path d="M.5.500h9v9L5 14.500.5 9.500z" fill="#dfe9f8" stroke="#607da8" /><path d="M5 4v5" stroke="#8fa6c6" /></svg>
              </SliderThumb>
            </SliderTrack>
            <svg width="17" height="17" viewBox="0 0 17 17"><circle cx="8.500" cy="8.500" r="7.500" fill="#c2d4ed" stroke="#5c7aa8" /><path d="M4 7h3V4h3v3h3v3h-3v3H7v-3H4z" fill="#42526c" /></svg>
            <FitBtn>
              <svg width="15" height="15" viewBox="0 0 15 15"><rect x=".5" y=".5" width="14" height="14" rx="2" fill="#e3ecf9" stroke="#8aa3c8" /><path d="M7.500 2.500v3M6 4h3M2 7h3M10 7h3M7.500 9v3M4 12h2M10 3l2 2M3 10l2 2" stroke="#555" /></svg>
            </FitBtn>
          </StatusRight>
        </StatusBar>
        <Orb><OrbIcon /></Orb>
        <Menu>
          <MenuBody>
            <LeftMenu>
              {leftItems.map((it, i) => (
                <React.Fragment key={i}>
                  <LeftItem $on={it.on} $off={it.off}>
                    {it.icon}
                    <LeftLabel>{it.label}</LeftLabel>
                    {it.sub && <SubArrow $off={it.off} />}
                  </LeftItem>
                  {it.rule && <MenuRule />}
                </React.Fragment>
              ))}
            </LeftMenu>
            <RightPanel>
              <PanelHead>Preparazione del documento per la distribuzione</PanelHead>
              {panelItems.map((it, i) => (
                <PanelItem key={i} $on={it.on}>
                  <PanelIcon>{it.icon}</PanelIcon>
                  <div>
                    <PanelTitle>{it.title}</PanelTitle>
                    <PanelDesc>{it.desc}</PanelDesc>
                  </div>
                  {it.sub && <PanelArrow />}
                </PanelItem>
              ))}
            </RightPanel>
          </MenuBody>
          <MenuFoot>
            <FootButton $w={148}>
              <svg width="16" height="16" viewBox="0 0 16 16"><path d="M2.500.5h8l3 3v12h-11z" fill="#fff" stroke="#7e92b2" /><path d="M5 5h2v2H5zM5 9h2v2H5zM9 6h2M9 10h2" fill="none" stroke="#445" /></svg>
              <span><u>O</u>pzioni di PowerPoint</span>
            </FootButton>
            <FootButton $w={129}>
              <svg width="16" height="16" viewBox="0 0 16 16"><path d="M2 2l12 12M14 2L2 14" stroke="#555" strokeWidth="2" /></svg>
              <span>Es<u>c</u>i da PowerPoint</span>
            </FootButton>
          </MenuFoot>
        </Menu>
      </Window>
    </>
  );
}
